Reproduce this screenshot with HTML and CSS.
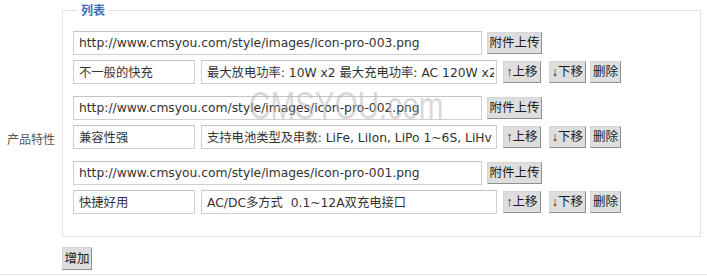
FILE: index.html
```html
<!DOCTYPE html>
<html lang="zh-CN">
<head>
<meta charset="utf-8">
<title>产品特性</title>
<link rel="stylesheet" href="styles.css">
</head>
<body>
<div class="form-row">
  <div class="label">产品特性</div>
  <div class="field">
    <fieldset class="list">
      <legend>列表</legend>
      <div class="item">
        <div class="line">
          <input class="url" type="text" value="http://www.cmsyou.com/style/images/icon-pro-003.png">
          <button class="btn upload">附件上传</button>
        </div>
        <div class="line">
          <input class="title" type="text" value="不一般的快充">
          <input class="desc" type="text" value="最大放电功率: 10W x2 最大充电功率: AC 120W x2">
          <button class="btn up">↑上移</button>
          <button class="btn down">↓下移</button>
          <button class="btn del">删除</button>
        </div>
      </div>
      <div class="item">
        <div class="line">
          <input class="url" type="text" value="http://www.cmsyou.com/style/images/icon-pro-002.png">
          <button class="btn upload">附件上传</button>
        </div>
        <div class="line">
          <input class="title" type="text" value="兼容性强">
          <input class="desc" type="text" value="支持电池类型及串数: LiFe, LiIon, LiPo 1~6S, LiHv 1~6S">
          <button class="btn up">↑上移</button>
          <button class="btn down">↓下移</button>
          <button class="btn del">删除</button>
        </div>
      </div>
      <div class="item">
        <div class="line">
          <input class="url" type="text" value="http://www.cmsyou.com/style/images/icon-pro-001.png">
          <button class="btn upload">附件上传</button>
        </div>
        <div class="line">
          <input class="title" type="text" value="快捷好用">
          <input class="desc" type="text" value="AC/DC多方式  0.1~12A双充电接口">
          <button class="btn up">↑上移</button>
          <button class="btn down">↓下移</button>
          <button class="btn del">删除</button>
        </div>
      </div>
    </fieldset>
    <button class="btn add">增加</button>
  </div>
  <div class="watermark">CMSYOU.com</div>
</div>
</body>
</html>
```

FILE: styles.css
```css
html, body {
  margin: 0;
  padding: 0;
  background: #ffffff;
}

body {
  font-family: "DejaVu Sans", "Noto Sans CJK SC", sans-serif;
  font-size: 12px;
  color: #333;
  width: 707px;
}

.form-row {
  position: relative;
  display: flex;
  align-items: stretch;
  border-bottom: 1px solid #e6e6e6;
  padding-bottom: 4px;
}

.label {
  width: 62px;
  box-sizing: border-box;
  padding-left: 7px;
  display: flex;
  align-items: center;
  font-family: "Noto Sans CJK SC", sans-serif;
  font-size: 12px;
  color: #555;
  padding-top: 6px;
}

.field {
  padding-top: 3px;
  width: 639px;
}

.list {
  margin: 0;
  border: 1px solid #e2e2e2;
  padding: 14px 10px 22px 10px;
  min-width: 0;
}

.list legend {
  margin-left: 4px;
  padding: 0 4px;
  font-family: "Noto Sans CJK SC", sans-serif;
  font-size: 12px;
  line-height: 14px;
  font-weight: bold;
  color: #3b6dc1;
}

.item {
  display: flex;
  flex-direction: column;
  gap: 5px;
  margin-bottom: 12px;
}

.item:last-child {
  margin-bottom: 0;
}

.line {
  display: flex;
  align-items: center;
  height: 24px;
}

input {
  box-sizing: border-box;
  height: 24px;
  margin: 0;
  border: 1px solid #cfcfcf;
  border-top-color: #c4c4c4;
  padding: 0 5px;
  font-family: "DejaVu Sans", "Noto Sans CJK SC", sans-serif;
  font-size: 12.3px;
  color: #333;
  background: #fff;
  outline: none;
}

.url { width: 409px; }
.title { width: 122px; }
.desc { width: 296px; margin-left: 6px; padding-right: 2px; }

.btn {
  box-sizing: border-box;
  height: 22px;
  margin: 0;
  padding: 0 1px;
  font-family: "Liberation Sans", "Noto Sans CJK SC", sans-serif;
  font-size: 12.5px;
  color: #1a1a1a;
  background: #dedede;
  border: 1px solid;
  border-color: #d6d6d6 #8f8f8f #8f8f8f #d6d6d6;
  border-radius: 0;
  line-height: 20px;
}

.upload { margin-left: 5px; width: 55px; }
.up { margin-left: 6px; width: 38px; }
.down { margin-left: 8px; width: 37px; }
.del { margin-left: 4px; width: 31px; }

.add {
  margin-top: 10px;
  width: 30px;
  height: 23px;
}

.watermark {
  position: absolute;
  left: 249px;
  top: 84px;
  font-family: "Liberation Sans", sans-serif;
  font-size: 38px;
  line-height: 44px;
  color: rgba(185, 185, 185, 0.55);
  transform: scaleX(0.78);
  transform-origin: left top;
  pointer-events: none;
}
```
